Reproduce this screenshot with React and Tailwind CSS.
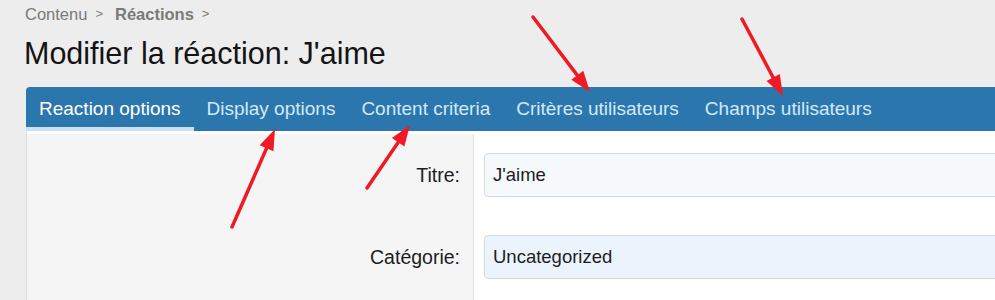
import React from 'react';

const tabs = [
  'Reaction options',
  'Display options',
  'Content criteria',
  'Critères utilisateurs',
  'Champs utilisateurs',
];

// red annotation arrows: [x1, y1, x2, y2] tail -> tip
const arrows = [
  [232, 227, 275, 129],
  [367, 188, 410, 125],
  [533, 17, 590, 92],
  [742, 19, 783, 96],
];

const Arrow = ({ a }) => {
  const [x1, y1, x2, y2] = a;
  const dx = x2 - x1;
  const dy = y2 - y1;
  const len = Math.hypot(dx, dy);
  const ux = dx / len;
  const uy = dy / len;
  const hl = 21;
  const hw = 7.5;
  const bx = x2 - ux * hl;
  const by = y2 - uy * hl;
  const p1 = `${bx - uy * hw},${by + ux * hw}`;
  const p2 = `${bx + uy * hw},${by - ux * hw}`;
  return (
    <g>
      <line x1={x1} y1={y1} x2={bx + ux * 2} y2={by + uy * 2} stroke="#f01a24" strokeWidth="3.5" strokeLinecap="round" />
      <polygon points={`${x2},${y2} ${p1} ${p2}`} fill="#f01a24" />
    </g>
  );
};

const Field = ({ label, value, bg }) => (
  <div className="flex h-[82px]">
    <div className="w-[446px] shrink-0 bg-[#f5f5f5] flex items-center justify-end pr-[13px] pt-[2px] text-[19.5px] text-[#1d1d1d]">
      {label}
    </div>
    <div className="flex-1 border-l border-[#e3e3e3] pl-[10px] flex items-center">
      <div className={`flex-1 -mr-[30px] h-[44px] rounded-[4px] border border-[#d6d9dc] flex items-center pl-[8px] text-[18.5px] text-[#1d1d1d] ${bg}`}>
        {value}
      </div>
    </div>
  </div>
);

export default function App() {
  return (
    <div className="relative w-[995px] h-[300px] overflow-hidden bg-[#ededed] font-['Liberation_Sans',Arial,sans-serif]">
      <div className="pl-[25px] pt-[4px] text-[16.5px] leading-[20px] text-[#7a7a7a] flex items-center h-[24px]">
        <span>Contenu</span>
        <span className="text-[13px] ml-[8px]">&gt;</span>
        <span className="font-bold ml-[12px]">Réactions</span>
        <span className="text-[13px] ml-[8px]">&gt;</span>
      </div>
      <h1 className="pl-[24px] mt-[11px] text-[30.5px] leading-[36px] text-[#141414]">Modifier la réaction: J'aime</h1>

      <div className="ml-[26px] mt-[16px]">
        <div className="h-[44px] bg-[#2b77ad] rounded-tl-[4px] flex">
          {tabs.map((t, i) => (
            <div
              key={t}
              className={
                i === 0
                  ? 'px-[13px] pt-[11px] text-[19px] leading-[22px] text-white border-b-[4px] border-[#c8e1f4]'
                  : 'px-[13px] pt-[11px] text-[19px] leading-[22px] text-[#d3e8f7]'
              }
            >
              {t}
            </div>
          ))}
        </div>
        <div className="border-l border-[#dcdcdc] bg-white pt-[3px]">
          <Field label="Titre:" value="J'aime" bg="bg-[#f6f9fc]" />
          <Field label="Catégorie:" value="Uncategorized" bg="bg-[#ebf4fd]" />
          <div className="flex h-[40px]">
            <div className="w-[446px] bg-[#f5f5f5]" />
            <div className="flex-1 border-l border-[#e3e3e3]" />
          </div>
        </div>
      </div>

      <svg className="absolute inset-0 pointer-events-none" width="995" height="300">
        {arrows.map((a, i) => (
          <Arrow key={i} a={a} />
        ))}
      </svg>
    </div>
  );
}
